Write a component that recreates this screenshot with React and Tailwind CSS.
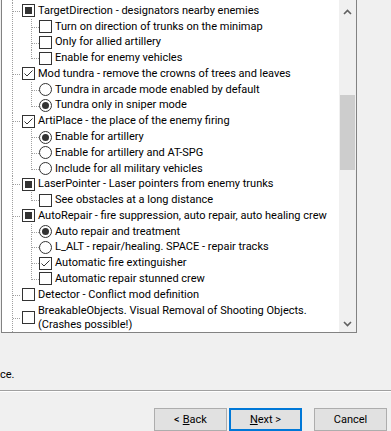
const DOT = "#a0a0a0";

function Check({ state }) {
  return (
    <div className="w-[13px] h-[13px] shrink-0 border border-[#333333] bg-white flex items-center justify-center">
      {state === "ind" && <div className="w-[7px] h-[7px] bg-[#333333]" />}
      {state === "on" && (
        <svg width="11" height="11" viewBox="0 0 11 11">
          <path d="M1.5 5.5 L4 8 L9.5 2.5" fill="none" stroke="#333333" strokeWidth="1" />
        </svg>
      )}
    </div>
  );
}

function Radio({ on }) {
  return (
    <div className="w-[13px] h-[13px] shrink-0 rounded-full border border-[#333333] bg-white flex items-center justify-center">
      {on && <div className="w-[7px] h-[7px] rounded-full bg-[#333333]" />}
    </div>
  );
}

const rows = [
  { lvl: 0, kind: "check", state: "ind", text: "TargetDirection - designators nearby enemies", hasKids: true },
  { lvl: 1, kind: "check", state: "off", text: "Turn on direction of trunks on the minimap" },
  { lvl: 1, kind: "check", state: "off", text: "Only for allied artillery" },
  { lvl: 1, kind: "check", state: "off", text: "Enable for enemy vehicles", last: true },
  { lvl: 0, kind: "check", state: "on", text: "Mod tundra - remove the crowns of trees and leaves", hasKids: true },
  { lvl: 1, kind: "radio", on: false, text: "Tundra in arcade mode enabled by default" },
  { lvl: 1, kind: "radio", on: true, text: "Tundra only in sniper mode", last: true },
  { lvl: 0, kind: "check", state: "on", text: "ArtiPlace - the place of the enemy firing", hasKids: true },
  { lvl: 1, kind: "radio", on: true, text: "Enable for artillery" },
  { lvl: 1, kind: "radio", on: false, text: "Enable for artillery and AT-SPG" },
  { lvl: 1, kind: "radio", on: false, text: "Include for all military vehicles", last: true },
  { lvl: 0, kind: "check", state: "ind", text: "LaserPointer - Laser pointers from enemy trunks", hasKids: true },
  { lvl: 1, kind: "check", state: "off", text: "See obstacles at a long distance", last: true },
  { lvl: 0, kind: "check", state: "ind", text: "AutoRepair - fire suppression, auto repair, auto healing crew", hasKids: true },
  { lvl: 1, kind: "radio", on: true, text: "Auto repair and treatment" },
  { lvl: 1, kind: "radio", on: false, text: "L_ALT - repair/healing. SPACE - repair tracks" },
  { lvl: 1, kind: "check", state: "on", text: "Automatic fire extinguisher" },
  { lvl: 1, kind: "check", state: "off", text: "Automatic repair stunned crew", last: true },
  { lvl: 0, kind: "check", state: "off", text: "Detector - Conflict mod definition" },
  { lvl: 0, kind: "check", state: "off", text: ["BreakableObjects. Visual Removal of Shooting Objects.", "(Crashes possible!)"], tall: true },
];

function Row({ r }) {
  const h = r.tall ? 30 : 16;
  const cy = r.tall ? 15 : 8;
  return (
    <div className={`relative flex items-center ${r.tall ? "h-[30px]" : "h-[16px]"} ${r.lvl === 0 ? "pl-[20px]" : "pl-[37px]"}`}>
      <svg className="absolute left-0 top-0" width="40" height={h}>
        <line x1="10.5" y1="0" x2="10.5" y2={h} stroke={DOT} strokeDasharray="1 1" />
        {r.lvl === 0 && <line x1="11" y1={cy + 0.5} x2="19" y2={cy + 0.5} stroke={DOT} strokeDasharray="1 1" />}
        {r.lvl === 0 && r.hasKids && <line x1="29.5" y1={cy + 8} x2="29.5" y2={h} stroke={DOT} strokeDasharray="1 1" />}
        {r.lvl === 1 && (
          <line x1="29.5" y1="0" x2="29.5" y2={r.last ? cy + 1 : h} stroke={DOT} strokeDasharray="1 1" />
        )}
        {r.lvl === 1 && <line x1="30" y1={cy + 0.5} x2="37" y2={cy + 0.5} stroke={DOT} strokeDasharray="1 1" />}
      </svg>
      <div className="relative">
        {r.kind === "check" ? <Check state={r.state} /> : <Radio on={r.on} />}
      </div>
      <div className={`relative ml-[3px] whitespace-nowrap text-[11px] text-black leading-[14px] ${r.tall ? "self-start pt-[1px]" : ""}`}>
        {Array.isArray(r.text) ? r.text.map((t) => <div key={t}>{t}</div>) : r.text}
      </div>
    </div>
  );
}

export default function App() {
  return (
    <div
      className="w-[391px] h-[431px] bg-[#f0f0f0] overflow-hidden flex flex-col"
      style={{ fontFamily: 'Roboto, "Open Sans", sans-serif' }}
    >
      <div className="ml-[1px] w-[356px] h-[333px] shrink-0 bg-white border-l border-r border-b border-[#828282] flex overflow-hidden">
        <div className="flex-1 flex flex-col">
          <div className="relative h-[3px] shrink-0">
            <svg className="absolute left-0 top-0" width="20" height="3">
              <line x1="10.5" y1="0" x2="10.5" y2="3" stroke={DOT} strokeDasharray="1 1" />
            </svg>
          </div>
          {rows.map((r, i) => (
            <Row key={i} r={r} />
          ))}
        </div>
        <div className="w-[17px] shrink-0 bg-[#f0f0f0] flex flex-col">
          <div className="h-[20px] shrink-0 flex items-center justify-center pt-[3px]">
            <svg width="9" height="6" viewBox="0 0 9 6">
              <path d="M1 5 L4.5 1.5 L8 5" fill="none" stroke="#606060" strokeWidth="1.6" />
            </svg>
          </div>
          <div className="h-[75px] mt-[75px] mx-px bg-[#cdcdcd] shrink-0" />
          <div className="flex-1" />
          <div className="h-[17px] shrink-0 flex items-center justify-center">
            <svg width="9" height="6" viewBox="0 0 9 6">
              <path d="M1 1 L4.5 4.5 L8 1" fill="none" stroke="#606060" strokeWidth="1.6" />
            </svg>
          </div>
        </div>
      </div>
      <div className="h-[57px] shrink-0 pt-[35px] text-[11px] text-black leading-[14px]">
        <span>ce.</span>
      </div>
      <div className="h-[18px] shrink-0 border-t border-[#a0a0a0]">
        <div className="h-px bg-white" />
      </div>
      <div className="flex text-[11px] text-black leading-[14px]">
        <div className="ml-[154px] w-[73px] h-[23px] bg-[#e1e1e1] border border-[#adadad] flex items-center justify-center">
          &lt; <span className="underline ml-[3px]">B</span>ack
        </div>
        <div className="ml-[2px] w-[73px] h-[23px] bg-[#e1e1e1] border-2 border-[#0078d7] flex items-center justify-center">
          <span className="underline">N</span>ext &gt;
        </div>
        <div className="ml-[12px] w-[73px] h-[23px] bg-[#e1e1e1] border border-[#adadad] flex items-center justify-center">
          Cancel
        </div>
      </div>
    </div>
  );
}
